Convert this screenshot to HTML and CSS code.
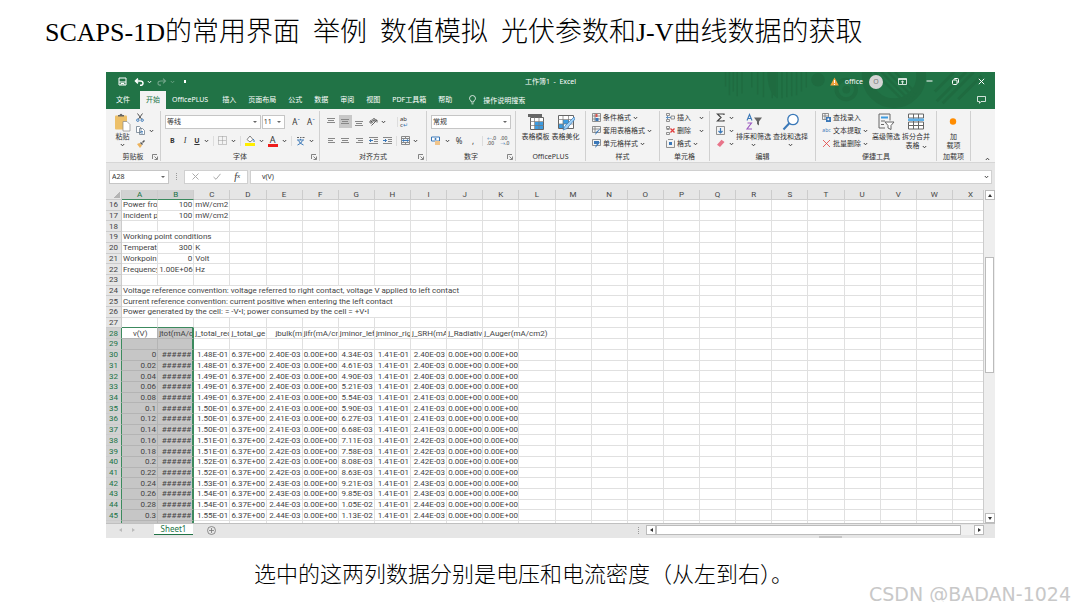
FILE: index.html
```html
<!DOCTYPE html>
<html lang="zh-CN">
<head>
	<meta charset="UTF-8">
	<title>SCAPS-1D</title>
	<link rel="stylesheet" href="styles.css">
</head>
<body>
	<!-- 公用图标 -->
	<svg class="defs">
		<symbol id="chev" viewBox="0 0 5 4"><path d="M.8 1l1.700 1.800L4.200 1" fill="none" stroke="currentColor" stroke-width=".9"/></symbol>
		<symbol id="launch" viewBox="0 0 6 6"><path d="M.5 5V.5H5M2.500 2.500L5 5M5.500 2.500v3h-3" fill="none" stroke="#666" stroke-width=".8"/></symbol>
	</svg>

	<h1><span class="en">SCAPS-1D</span>的常用界面<span class="en">  </span>举例<span class="en">  </span>数值模拟<span class="en">  </span>光伏参数和<span class="en">J-V</span>曲线数据的获取</h1>

	<div class="excel">
		<div class="top">
			<svg class="deco" viewBox="0 0 280 38" fill="none" stroke="#1f6b40">
				<path d="M7 0v15M11 0v24M15 0v20M19 0v25M24 0v22M34 0v16M40 0v23M46 0v26" stroke-width="1.500"/>
				<path d="M55 0v27M60 0v27M65 0v27M70 0v26M75 0v25M80 0v24M85 0v20M90 0v16" stroke-width="1.500"/>
				<path d="M50 0h9v26q-9-6-9-26z" fill="#1f6b40" stroke="none"/>
				<circle cx="102" cy="8" r="7" fill="#1f6b40" stroke="none"/>
				<circle cx="131" cy="18" r="10" stroke-width="4"/>
				<circle cx="131" cy="18" r="4" fill="#1f6b40" stroke="none"/>
				<circle cx="180" cy="4" r="28" stroke-width="10"/>
				<path d="M160 0l30 30M167 0l28 28M174 0l26 26M181 0l22 22" stroke-width="2.500"/>
				<path d="M224 30l30-30M230 32l32-32M222 20l20-20M246 28l24-24" stroke-width="3"/>
			</svg>
			<div class="titlebar">
				<div class="quick">
					<button aria-label="保存"><svg width="9" height="9" viewBox="0 0 9 9" fill="none" stroke="#fff"><path d="M1 1h7v7H1zM1 5h7M3 8V6.500h3V8"/></svg></button>
					<button aria-label="撤销"><svg width="10" height="8" viewBox="0 0 10 8" fill="none" stroke="#fff" stroke-width="1.500"><path d="M4 .6L1.500 3 4 5.400M1.500 3H6q3 0 3 2.200T6 7.200"/></svg></button>
					<svg class="chev"><use href="#chev"/></svg>
					<button aria-label="恢复" class="dim"><svg width="10" height="8" viewBox="0 0 10 8" fill="none" stroke="#fff" stroke-width="1.200"><path d="M6 .6L8.500 3 6 5.400M8.500 3H4Q1 3 1 5.200t3 2"/></svg></button>
					<svg class="chev dim"><use href="#chev"/></svg>
					<span class="more"></span>
				</div>
				<div class="doc">工作簿1  -  Excel</div>
				<div class="winbtns">
					<svg width="9" height="9" viewBox="0 0 9 9"><path d="M4.500.5L8.800 8.500H.2z" fill="#f2a33c"/><path d="M4.500 3v3M4.500 7v1" stroke="#fff"/></svg>
					<span class="user">office</span>
					<span class="avatar">O</span>
					<button aria-label="功能区显示选项"><svg width="9" height="7" viewBox="0 0 9 7" fill="none" stroke="#fff"><path d="M.5.5h8v6h-8zM.5 1.500h8M4.500 6V3M3 4.200L4.500 3 6 4.200" stroke-width=".8"/></svg></button>
					<button aria-label="最小化"><svg width="7" height="7" viewBox="0 0 7 7" stroke="#fff"><path d="M.5 3h6"/></svg></button>
					<button aria-label="还原"><svg width="7" height="7" viewBox="0 0 7 7" fill="none" stroke="#fff"><rect x=".5" y="2" width="4.500" height="4.500" rx="1"/><path d="M2 1.500q0-1 1-1h2.500q1 0 1 1V4q0 1-1 1"/></svg></button>
					<button aria-label="关闭"><svg width="7" height="7" viewBox="0 0 7 7" stroke="#fff"><path d="M.8.800l5.400 5.400M6.200.800L.8 6.200"/></svg></button>
				</div>
			</div>
			<nav class="tabs">
				<a href="#" class="file">文件</a>
				<a href="#" class="active">开始</a>
				<a href="#" class="plus">OfficePLUS</a>
				<a href="#">插入</a>
				<a href="#">页面布局</a>
				<a href="#">公式</a>
				<a href="#">数据</a>
				<a href="#">审阅</a>
				<a href="#">视图</a>
				<a href="#">PDF工具箱</a>
				<a href="#">帮助</a>
				<a href="#" class="tell"><svg width="7" height="10" viewBox="0 0 7 10" fill="none" stroke="#fff" stroke-width=".8"><path d="M2.200 7V6Q.5 4.800.5 3.200.8.500 3.500.500t3 2.700Q6.500 4.800 4.800 6v1zM2.500 8.800h2"/></svg>操作说明搜索</a>
				<button class="comment" aria-label="批注"><svg width="9" height="8" viewBox="0 0 9 8" fill="none" stroke="#fff" stroke-width=".8"><path d="M.5.500h8v5H4L2.500 7.300V5.500h-2z"/></svg></button>
			</nav>
		</div>

		<div class="ribbon">
			<section class="group">
				<div class="body clip">
					<button class="big">
						<svg width="17" height="19" viewBox="0 0 17 19"><rect x="1" y="3" width="12" height="14" rx="1" fill="#edc069"/><path d="M4 4V2.500h1.500Q7 0 8.500 2.500H10V4z" fill="#666"/><path d="M9 9h4l3 3v6.500H9z" fill="#fff" stroke="#888" stroke-width=".7"/></svg>
						粘贴<svg class="chev"><use href="#chev"/></svg>
					</button>
					<div class="stack">
						<button aria-label="剪切"><svg width="8" height="9" viewBox="0 0 8 9" fill="none"><path d="M1.500.500l4 5.500M6.500.500l-4 5.500" stroke="#555"/><circle cx="1.800" cy="7.200" r="1.200" stroke="#3a78b8"/><circle cx="6.200" cy="7.200" r="1.200" stroke="#3a78b8"/></svg></button>
						<button aria-label="复制"><svg width="9" height="9" viewBox="0 0 9 9" fill="#fff" stroke="#6d7c8c" stroke-width=".8"><path d="M.5.500h3l1.500 1.500v4.500H.5zM3.500 2.500h3L8.500 4.500v4h-5z"/><path d="M4.500 5.500H7M4.500 7H7" stroke="#3a78b8"/></svg><svg class="chev"><use href="#chev"/></svg></button>
						<button aria-label="格式刷"><svg width="9" height="8" viewBox="0 0 9 8"><path d="M1 4l2.500-1L6 5.500 4 8z" fill="#edb35c"/><path d="M4 3l1-1L7 4 6 5zM6 2l2-2 1 1-2 2z" fill="#555"/></svg></button>
					</div>
				</div>
				<h2>剪贴板<svg class="launch"><use href="#launch"/></svg></h2>
			</section>

			<section class="group">
				<div class="body font">
					<div class="line">
						<span class="pick wide"><select aria-label="字体"><option>等线</option></select></span>
						<span class="pick size"><select aria-label="字号"><option>11</option></select></span>
						<button class="grow" aria-label="增大字号">A<sup>ˆ</sup></button>
						<button class="grow" aria-label="减小字号">A<sup>ˇ</sup></button>
					</div>
					<div class="line marks">
						<button class="b">B</button>
						<button class="i">I</button>
						<button class="u">U</button><svg class="chev"><use href="#chev"/></svg>
						<span class="sep"></span>
						<button aria-label="边框"><svg width="9" height="9" viewBox="0 0 9 9" fill="none" stroke="#999" stroke-dasharray="1 1"><path d="M.5.500h8v8h-8zM4.500.500v8M.5 4.500h8"/></svg></button><svg class="chev"><use href="#chev"/></svg>
						<span class="sep"></span>
						<button aria-label="填充颜色"><svg width="10" height="11" viewBox="0 0 10 11"><path d="M2 4.500L5 1l3 3.500L5 7z" fill="#fff" stroke="#666" stroke-width=".8"/><path d="M8 4q1.500 1 1 3" stroke="#3a78b8" fill="none"/><path d="M0 8h10v3H0z" fill="#ffee00"/></svg></button><svg class="chev"><use href="#chev"/></svg>
						<button class="color" aria-label="字体颜色">A</button><svg class="chev"><use href="#chev"/></svg>
						<span class="sep"></span>
						<button class="pinyin" aria-label="拼音"><svg width="9" height="10" viewBox="0 0 9 10" fill="none"><path d="M1 1.500h2M4 1.500h1.500M6.500 1.500h2" stroke="#666"/><path d="M1 4h7M4.500 2.800V4M2.500 4.500q1 3 5 4.500M6.500 4.500q-1 3-5 4.500" stroke="#3a78b8"/></svg></button><svg class="chev"><use href="#chev"/></svg>
					</div>
				</div>
				<h2>字体<svg class="launch"><use href="#launch"/></svg></h2>
			</section>

			<section class="group">
				<div class="body align">
					<div class="line">
						<button aria-label="顶端对齐"><svg class="al"><path d="M0 1.500h8M1 3.500h6M0 5.500h8"/></svg></button>
						<button aria-label="垂直居中" class="on"><svg class="al"><path d="M0 2.500h8M1 4.500h6M0 6.500h8"/></svg></button>
						<button aria-label="底端对齐"><svg class="al"><path d="M0 4.500h8M1 6.500h6M0 8.500h8"/></svg></button>
						<button aria-label="方向" class="orient"><svg width="9" height="9" viewBox="0 0 9 9" fill="none" stroke="#555" stroke-width=".9"><path d="M1.500 3.500l2 2M3 2.500l2 2M2.500 8.500L8 3M8 5.500V3H5.500"/><circle cx="2" cy="5" r="1.200"/><circle cx="5" cy="2.800" r="1.200"/></svg></button><svg class="chev"><use href="#chev"/></svg>
						<span class="sep"></span>
						<button aria-label="自动换行" class="wrap">ab<br>c<i>↵</i></button>
					</div>
					<div class="line">
						<button aria-label="左对齐"><svg class="al"><path d="M1 2.500h7M1 4.500h5M1 6.500h7"/></svg></button>
						<button aria-label="居中"><svg class="al"><path d="M0 2.500h8M1 4.500h6M0 6.500h8"/></svg></button>
						<button aria-label="右对齐"><svg class="al"><path d="M1 2.500h7M3 4.500h5M1 6.500h7"/></svg></button>
						<button aria-label="减少缩进量"><svg class="al"><path d="M0 1.500h9M5 3.500h4M5 5.500h4M0 7.500h9"/><path d="M4 4.500H.5M2 3L.5 4.500 2 6" class="blue"/></svg></button>
						<button aria-label="增加缩进量"><svg class="al"><path d="M0 1.500h9M5 3.500h4M5 5.500h4M0 7.500h9"/><path d="M0 4.500h3.500M2 3l1.500 1.500L2 6" class="blue"/></svg></button>
						<span class="sep"></span>
						<button aria-label="合并后居中"><svg class="al"><path d="M.5.500h8v8h-8zM.5 2.500h8M.5 6.500h8M4.500.500v2M4.500 6.500v2"/><path d="M1.500 4.500h6M3 3.500l-1.500 1L3 5.500M6 3.500l1.500 1L6 5.500" class="blue"/></svg></button><svg class="chev"><use href="#chev"/></svg>
					</div>
				</div>
				<h2>对齐方式<svg class="launch"><use href="#launch"/></svg></h2>
			</section>

			<section class="group">
				<div class="body number">
					<div class="line"><span class="pick full"><select aria-label="数字格式"><option>常规</option></select></span></div>
					<div class="line">
						<button aria-label="会计数字格式"><svg width="10" height="9" viewBox="0 0 10 9"><path d="M.5 1h8v4h-8z" fill="#fff" stroke="#3a78b8"/><circle cx="4.500" cy="3" r="1" fill="#3a78b8"/><path d="M4 5h5v4H4z" fill="#f0c48a"/></svg></button><svg class="chev"><use href="#chev"/></svg>
						<button class="pct">%</button>
						<button class="pct">,</button>
						<span class="sep"></span>
						<button class="dec" aria-label="增加小数位数"><i>←</i>.0<br>.00</button>
						<button class="dec" aria-label="减少小数位数">.00<br><i>→</i>.0</button>
					</div>
				</div>
				<h2>数字<svg class="launch"><use href="#launch"/></svg></h2>
			</section>

			<section class="group">
				<div class="body bigs">
					<button class="big"><svg width="18" height="18" viewBox="0 0 18 18"><path d="M1 1h14v3H1z" fill="#666"/><path d="M3.500 4.500h13v12h-13z" fill="#fff" stroke="#666"/><path d="M8 9h8v7H8z" fill="#3d9be0"/><path d="M3 8.500h14M3 12.500h14M7.500 4v12M12 4v12" stroke="#777" stroke-width=".7"/></svg>表格模板</button>
					<button class="big"><svg width="18" height="18" viewBox="0 0 18 18"><path d="M1.500 2.500h15v13h-15z" fill="#fff" stroke="#666"/><path d="M6 7h6v4H6zM2 11h5v4H2z" fill="#3d9be0"/><path d="M1 6.500h15M1 11h15M6 3v12M11.500 3v12" stroke="#777" stroke-width=".7"/><path d="M17 4L8 13l-2 4 4-1.500 8-9.500z" fill="#9fd0f5" stroke="#3a78b8" stroke-width=".7"/></svg>表格美化</button>
				</div>
				<h2>OfficePLUS</h2>
			</section>

			<section class="group">
				<div class="body list">
					<button><svg class="ic"><path d="M.5.500h8v8h-8zM3 .5v8M.5 3h8M.5 6h8"/><path d="M3.500 1h2v3h-2z" class="fillred"/><path d="M3.500 5h3v3h-3z" class="fillblue"/></svg>条件格式<svg class="chev"><use href="#chev"/></svg></button>
					<button><svg class="ic"><path d="M.5.500h8v6h-8zM3 .5v6M.5 3h8"/><path d="M9 2L5 7 3 9l1-3z" class="fillblue"/></svg>套用表格格式<svg class="chev"><use href="#chev"/></svg></button>
					<button><svg class="ic"><path d="M.5.500h8v6h-8z"/><path d="M2 2h5v3H2zM9 2L5 7 3 9l1-3z" class="fillblue"/></svg>单元格样式<svg class="chev"><use href="#chev"/></svg></button>
				</div>
				<h2>样式</h2>
			</section>

			<section class="group">
				<div class="body list cells">
					<button><svg class="ic"><path d="M.5.500h3v2h-3zM.5 6.500h3v2h-3zM5 3h3.500v3H5z"/><path d="M5 4.500H.5M2 3L.5 4.500 2 6" class="blue"/></svg>插入<svg class="chev far"><use href="#chev"/></svg></button>
					<button><svg class="ic"><path d="M.5.500h3v2h-3zM.5 6.500h3v2h-3zM.5 3.500h3"/><path d="M4.500 2.500l4 4M8.500 2.500l-4 4" class="red" stroke-width="1.300"/></svg>删除<svg class="chev far"><use href="#chev"/></svg></button>
					<button><svg class="ic"><path d="M.5 1.500v7h8v-7M2 .5h5"/><path d="M3 3h3v3H3z" class="fillblue"/></svg>格式<svg class="chev"><use href="#chev"/></svg></button>
				</div>
				<h2>单元格</h2>
			</section>

			<section class="group">
				<div class="body edit">
					<div class="list">
						<button aria-label="自动求和"><svg class="ic"><path d="M8 2V1H1.500L5 4.500 1.500 8H8V7" stroke="#444" stroke-width="1.200"/></svg><svg class="chev"><use href="#chev"/></svg></button>
						<button aria-label="填充"><svg class="ic"><path d="M.5.500h8v8h-8z"/><path d="M4.500 2v5M2.500 5l2 2 2-2" class="blue" stroke-width="1.200"/></svg><svg class="chev"><use href="#chev"/></svg></button>
						<button aria-label="清除"><svg class="ic"><path d="M5.500.800L8.500 3 4 8 1 5.800z" fill="#e8748a" stroke="none"/></svg><svg class="chev"><use href="#chev"/></svg></button>
					</div>
					<button class="big"><svg width="18" height="19" viewBox="0 0 18 19" fill="none"><path d="M2 8l2.500-6L7 8M3 6h3" stroke="#3a78b8" stroke-width="1.100"/><path d="M2.500 10.500h4L2 16.500h5" stroke="#9b57c0" stroke-width="1.100"/><path d="M9 5h8l-3 4v4l-2-1.500V9z" fill="#666"/></svg>排序和筛选<svg class="chev"><use href="#chev"/></svg></button>
					<button class="big"><svg width="18" height="19" viewBox="0 0 18 19" fill="none" stroke="#3a78b8"><circle cx="11" cy="7" r="5.200" fill="#fff" stroke-width="1.300"/><path d="M7.300 10.800L1.500 17" stroke-width="2"/></svg>查找和选择<svg class="chev"><use href="#chev"/></svg></button>
				</div>
				<h2>编辑</h2>
			</section>

			<section class="group">
				<div class="body tools">
					<div class="list">
						<button><svg class="ic"><path d="M.5.500h6v6h-6zM.5 3h6M3 .5v6"/><path d="M4 4h5v5H4z" class="fillblue"/><circle cx="6.300" cy="6.300" r="1" fill="#fff" stroke="none"/></svg>查找录入</button>
						<button><span class="abc">abc</span>文本提取<svg class="chev"><use href="#chev"/></svg></button>
						<button><svg class="ic"><path d="M1 1l7 7M8 1L1 8" class="red"/></svg>批量删除<svg class="chev"><use href="#chev"/></svg></button>
					</div>
					<button class="big"><svg width="18" height="19" viewBox="0 0 18 19" fill="none" stroke="#666"><path d="M13 8V1.500H2v14h6"/><path d="M4 5h7" stroke="#3d9be0" stroke-width="2"/><path d="M4 8.500h4M4 12h3"/><path d="M8 9.500h9L14 13v4l-3-1.500V13z" fill="#fff"/></svg>高级筛选</button>
					<button class="big"><svg width="18" height="19" viewBox="0 0 18 19" fill="#fff" stroke="#666"><path d="M1.500 1.500h15v4h-15zM1.500 9.500h15v7h-15zM1.500 13h15M6.500 1.500v15M11.500 1.500v15"/><path d="M1 6h16v2.500H1z" fill="#5eb1ea" stroke="none"/></svg>拆分合并<span class="two">表格 <svg class="chev"><use href="#chev"/></svg></span></button>
				</div>
				<h2>便捷工具</h2>
			</section>

			<section class="group">
				<div class="body bigs">
					<button class="big"><svg width="18" height="19" viewBox="0 0 18 19"><circle cx="8" cy="9" r="3.200" fill="#ff8c00"/></svg>加<span>载项</span></button>
				</div>
				<h2>加载项</h2>
			</section>
			<button class="collapse" aria-label="折叠功能区"><svg class="chev"><use href="#chev"/></svg></button>
		</div>

		<div class="formula">
			<span class="pick name"><input aria-label="名称框" value="A28"></span>
			<span class="dots"></span>
			<div class="fxbox">
				<button aria-label="取消"><svg width="7" height="7" viewBox="0 0 7 7" stroke="#aaa"><path d="M.5.500l6 6M6.500.500l-6 6"/></svg></button>
				<button aria-label="输入"><svg width="8" height="7" viewBox="0 0 8 7" fill="none" stroke="#aaa"><path d="M.5 4L3 6.300 7.500.800"/></svg></button>
				<button class="fx">f<small>x</small></button>
			</div>
			<span class="content"><input aria-label="编辑栏" value="      v(V)"><svg class="chev"><use href="#chev"/></svg></span>
		</div>

		<div class="sheet">
			<div class="cellsbox"><table id="grid"></table></div>
			<div class="vbar">
				<button class="up" aria-label="向上"></button>
				<div class="track"><div class="thumb"></div></div>
				<button class="down" aria-label="向下"></button>
			</div>
		</div>

		<div class="bottom">
			<span class="move left"></span>
			<span class="move right"></span>
			<a href="#" class="sheettab">Sheet1</a>
			<button class="add" aria-label="新工作表"><svg width="9" height="9" viewBox="0 0 9 9" fill="none" stroke="#777" stroke-width=".8"><circle cx="4.500" cy="4.500" r="4"/><path d="M4.500 2v5M2 4.500h5"/></svg></button>
			<span class="dots"></span>
			<div class="hbar">
				<button class="prev" aria-label="向左"></button>
				<div class="thumb"></div>
				<button class="next" aria-label="向右"></button>
			</div>
		</div>
		<div class="grip"></div>
	</div>

	<p class="caption">选中的这两列数据分别是电压和电流密度（从左到右）。</p>
	<div class="mark">CSDN @BADAN-1024</div>
	<script src="sheet.js"></script>
</body>
</html>
```

FILE: styles.css
```css
*{
	margin: 0;
	padding: 0;
	box-sizing: border-box;
}
body{
	background: #ffffff;
	font-family: "Liberation Serif","Noto Sans CJK SC",serif;
	color: #000000;
	overflow: hidden;
}
a{
	color: inherit;
	text-decoration: none;
}
button{
	border: none;
	background: transparent;
	font: inherit;
	color: inherit;
	display: flex;
	align-items: center;
	white-space: nowrap;
}
svg{
	flex: none;
	display: block;
}
.defs{
	width: 0;
	height: 0;
	position: absolute;
}
h1{
	padding: 11px 0 0 45px;
	height: 72px;
	font-family: "Noto Sans CJK SC",sans-serif;
	font-size: 27px;
	line-height: 38px;
	font-weight: 300;
	white-space: pre;
}
.en{
	font-family: "Liberation Serif",serif;
	font-size: 26px;
	font-weight: 400;
}
.excel{
	margin: 0 79px 0 106px;
	background: #e6e6e6;
	font-family: "Noto Sans","Noto Sans CJK SC",sans-serif;
	font-size: 7px;
	line-height: 9px;
	color: #333333;
}
.chev{
	width: 5px;
	height: 4px;
}
.dim{
	opacity: 0.35;
}
/*绿色标题栏*/
.top{
	position: relative;
	background: #217346;
	color: #ffffff;
}
.deco{
	position: absolute;
	right: 0;
	top: 0;
	width: 280px;
	height: 37px;
}
.titlebar{
	position: relative;
	display: grid;
	grid-template-columns: 1fr auto 1fr;
	align-items: center;
	height: 19px;
}
.quick{
	display: flex;
	align-items: center;
	gap: 3px;
	padding-left: 12px;
}
.quick button{
	margin-left: 2px;
}
.quick button:first-child{
	margin: 0 2px 0 0;
}
.more{
	width: 2px;
	height: 3px;
	margin-left: 6px;
	background: #ffffff;
}
.doc{
	white-space: pre;
}
.winbtns{
	display: flex;
	align-items: center;
	justify-content: flex-end;
	padding-right: 10px;
}
.winbtns button{
	margin-left: 19px;
}
.user{
	margin: 0 6px;
}
.avatar{
	width: 14px;
	height: 14px;
	border-radius: 50%;
	background: #d5d5d5;
	color: #777777;
	text-align: center;
	line-height: 14px;
	margin-right: -4px;
}
.tabs{
	position: relative;
	display: flex;
	height: 18px;
	line-height: 17px;
}
.tabs a{
	padding: 0 6px;
	white-space: nowrap;
}
.tabs .file{
	padding: 0 10px;
}
.tabs .plus{
	padding-right: 8px;
}
.tabs .active{
	background: #f3f3f3;
	color: #217346;
}
.tabs .tell{
	display: flex;
	align-items: center;
	gap: 7px;
	margin-left: 5px;
}
.comment{
	margin-left: auto;
	padding-right: 9px;
}
/*功能区*/
.ribbon{
	display: grid;
	grid-template-columns: 55px 159px 107px 89px 70px 74px 50px 106px 121px 34px 1fr;
	height: 54px;
	padding: 2px 0 1px;
	background: #f3f3f3;
	border-bottom: 1px solid #d6d6d6;
}
.group{
	position: relative;
	display: flex;
	flex-direction: column;
	border-right: 1px solid #d0d0d0;
}
.group h2{
	font-size: 7px;
	line-height: 8px;
	font-weight: normal;
	text-align: center;
}
.launch{
	position: absolute;
	right: 2px;
	bottom: 1px;
	width: 6px;
	height: 6px;
}
.body{
	height: 42px;
}
.line{
	display: flex;
	align-items: center;
	height: 19px;
}
.sep{
	width: 1px;
	height: 10px;
	background: #dddddd;
}
.big{
	flex-direction: column;
	line-height: 9px;
	padding-top: 1px;
}
.big > svg:first-child{
	height: 20px;
}
.big .chev{
	margin-top: 2px;
}
.clip{
	display: flex;
	align-items: flex-start;
	gap: 5px;
	padding-left: 8px;
}
.stack,.list{
	display: flex;
	flex-direction: column;
}
.stack button,.list button{
	height: 13px;
	gap: 2px;
}
.stack button{
	gap: 4px;
}
.font,.align,.number{
	padding: 1px 4px 0;
}
.pick{
	position: relative;
	display: block;
	height: 14px;
	background: #ffffff;
	border: 1px solid #c6c6c6;
}
.pick:after{
	content: "";
	position: absolute;
	right: 3px;
	top: 5px;
	border: 2px solid transparent;
	border-top-color: #666666;
	border-bottom: none;
}
.pick select,.pick input{
	appearance: none;
	display: block;
	width: 100%;
	height: 12px;
	padding-left: 1px;
	border: none;
	background: transparent;
	font: inherit;
	color: inherit;
}
.wide{
	width: 99px;
}
.size{
	width: 24px;
	margin-left: 1px;
}
.full{
	width: 80px;
}
.grow{
	margin-left: 7px;
	font-size: 8px;
}
.grow sup{
	color: #3a78b8;
}
.marks{
	gap: 4px;
	padding-left: 5px;
}
.b{
	font-weight: bold;
	margin-right: 5px;
}
.i{
	font-family: "Liberation Serif",serif;
	font-style: italic;
	font-size: 8px;
	margin-right: 4px;
}
.u{
	text-decoration: underline;
	font-weight: bold;
}
.color{
	width: 10px;
	height: 12px;
	justify-content: center;
	font-size: 9px;
	border-bottom: 3px solid #ee1c1c;
}
.align .line{
	gap: 1px;
	padding-left: 1px;
}
.align .line button{
	width: 13px;
	height: 13px;
	justify-content: center;
}
.align .sep{
	margin: 0 1px;
}
.align .orient + .chev{
	margin-right: 9px;
}
.align .on{
	background: #c8c8c8;
}
.al{
	width: 9px;
	height: 9px;
	fill: none;
	stroke: #888888;
}
.blue{
	stroke: #3a78b8;
}
.red{
	stroke: #e23d3d;
}
.fillblue{
	fill: #3a78b8;
	stroke: none;
}
.fillred{
	fill: #d9534f;
	stroke: none;
}
.align .wrap,.dec{
	display: block;
	text-align: left;
	font-size: 6px;
	line-height: 6px;
}
.wrap i,.dec i{
	font-style: normal;
	color: #3a78b8;
}
.number .line + .line{
	gap: 4px;
}
.pct{
	width: 10px;
	justify-content: center;
	font-size: 8px;
}
.dec{
	font-size: 5px;
	line-height: 5px;
}
.bigs{
	display: flex;
	justify-content: center;
	gap: 2px;
	align-items: flex-start;
}
.list{
	padding-left: 6px;
}
.ic{
	width: 9px;
	height: 9px;
	fill: none;
	stroke: #777777;
	stroke-width: 0.8px;
}
.list .far{
	margin-left: 6px;
}
.edit,.tools{
	display: flex;
	align-items: flex-start;
	gap: 2px;
}
.edit .list button{
	gap: 4px;
}
.tools .list{
	width: 54px;
}
.abc{
	width: 9px;
	font-size: 5px;
	color: #3a78b8;
}
.two{
	display: flex;
	align-items: center;
	gap: 2px;
}
.collapse{
	justify-self: end;
	align-self: end;
	margin-right: 5px;
	transform: rotate(180deg);
}
/*编辑栏*/
.formula{
	display: flex;
	align-items: center;
	height: 27px;
	padding: 0 3px;
}
.name{
	width: 60px;
}
.name input{
	padding-left: 2px;
}
.dots{
	width: 1px;
	height: 7px;
	border-left: 1px dotted #999999;
}
.formula .dots{
	margin: 0 7px;
}
.fxbox{
	display: flex;
	align-items: center;
	justify-content: space-around;
	width: 64px;
	height: 14px;
	background: #ffffff;
	border: 1px solid #d0d0d0;
}
.fx{
	font-family: "Liberation Serif",serif;
	font-style: italic;
	font-size: 10px;
}
.fx small{
	font-size: 7px;
}
.content{
	flex: 1;
	display: flex;
	align-items: center;
	height: 14px;
	margin-left: 2px;
	padding-right: 2px;
	background: #ffffff;
	border: 1px solid #d0d0d0;
}
.content input{
	flex: 1;
	border: none;
	background: transparent;
	font: inherit;
	color: inherit;
}
/*表格区*/
.sheet{
	display: flex;
	height: 333px;
}
.cellsbox{
	flex: 1;
	min-width: 0;
	overflow: hidden;
	background: #ffffff;
}
#grid{
	table-layout: fixed;
	width: calc(100% + 6px);
	height: 342px;
	border-collapse: separate;
	border-spacing: 0;
	font-family: Roboto,sans-serif;
	font-size: 8px;
	line-height: 9px;
	color: #444444;
}
#grid th{
	background: #e6e6e6;
	border-right: 1px solid #cccccc;
	border-bottom: 1px solid #cccccc;
	font-weight: normal;
}
#grid th:first-child{
	width: 16px;
}
#grid td{
	padding: 0 1px;
	border-right: 1px solid #e0e0e0;
	border-bottom: 1px solid #e0e0e0;
	white-space: pre;
	overflow: hidden;
}
#grid .num{
	text-align: right;
}
#grid th.sel{
	background: #d2d2d2;
	color: #217346;
}
#grid thead .sel{
	border-bottom-color: #3c8a5e;
}
#grid td.sel{
	background: #c6c6c6;
	border-color: #b4b4b4;
}
#grid td.cur{
	background: #ffffff;
}
#grid td.edge{
	border-right: 2px solid #3c8a5e;
}
#grid th.rowsel{
	border-right-color: #3c8a5e;
}
#grid td.head{
	border-bottom-color: #3c8a5e;
}
#grid .corner:after{
	content: "";
	display: block;
	margin-left: 7px;
	width: 7px;
	height: 7px;
	background: linear-gradient(135deg,transparent 50%,#b4b4b4 50%);
}
.vbar{
	display: flex;
	flex-direction: column;
	width: 12px;
	padding: 0 1px;
	border-left: 1px solid #cccccc;
	background: #eeeeee;
}
.vbar button,.hbar button{
	justify-content: center;
	width: 10px;
	height: 10px;
	background: #ffffff;
	border: 1px solid #bbbbbb;
	flex: none;
}
.vbar button:after,.hbar button:after{
	content: "";
	border: 2px solid transparent;
}
.vbar .up:after{
	border-bottom: 3px solid #333333;
	border-top: none;
}
.vbar .down:after{
	border-top: 3px solid #333333;
	border-bottom: none;
}
.hbar .prev:after{
	border-right: 3px solid #333333;
	border-left: none;
}
.hbar .next:after{
	border-left: 3px solid #333333;
	border-right: none;
}
.track{
	flex: 1;
	padding-top: 57px;
}
.thumb{
	background: #ffffff;
	border: 1px solid #bbbbbb;
}
.track .thumb{
	height: 116px;
}
.bottom{
	display: flex;
	align-items: center;
	height: 13px;
	padding: 0 11px 0 13px;
	border-top: 1px solid #c0c0c0;
}
.move{
	border: 2px solid transparent;
	margin-right: 10px;
}
.move.left{
	border-right: 3px solid #bbbbbb;
	border-left: none;
}
.move.right{
	border-left: 3px solid #bbbbbb;
	border-right: none;
	margin-right: 19px;
}
.sheettab{
	align-self: flex-start;
	width: 39px;
	height: 11px;
	margin-right: 14px;
	background: #ffffff;
	border-bottom: 1px solid #217346;
	color: #217346;
	text-align: center;
	font-size: 8px;
	line-height: 9px;
}
.bottom .dots{
	margin-left: auto;
	margin-right: 7px;
}
.hbar{
	display: flex;
	flex: 0 1 338px;
	background: #f0f0f0;
}
.hbar .thumb{
	flex: 1;
	margin-right: 13px;
}
.grip{
	width: 23px;
	height: 2px;
	margin-left: auto;
	margin-right: 153px;
	background: #c6c6c6;
}
.caption{
	padding-left: 254px;
	margin-top: 20px;
	font-family: "Noto Sans CJK SC",sans-serif;
	font-size: 22px;
	line-height: 28px;
	font-weight: 300;
}
.mark{
	padding-right: 3px;
	text-align: right;
	font-family: "DejaVu Sans",sans-serif;
	font-size: 19px;
	line-height: 16px;
	color: #c8c8c8;
}
```

FILE: sheet.js
```js
var letters = "ABCDEFGHIJKLMNOPQRSTUVWX".split("");
// 每行: [内容, 类型, 占几列]
var text = {
	16: [["Power fro"], ["100", "num"], ["mW/cm2"]],
	17: [["Incident p"], ["100", "num"], ["mW/cm2"]],
	19: [["Working point conditions", "", 3]],
	20: [["Temperat"], ["300", "num"], ["K"]],
	21: [["Workpoin"], ["0", "num"], ["Volt"]],
	22: [["Frequency"], ["1.00E+06", "num"], ["Hz"]],
	24: [["Voltage reference convention: voltage referred to right contact, voltage V applied to left contact", "", 10]],
	25: [["Current reference convention: current positive when entering the left contact", "", 8]],
	26: [["Power generated by the cell: = -V•I; power consumed by the cell = +V•I", "", 8]],
	28: [["     v(V)"], ["jtot(mA/c"], ["j_total_rec"], ["j_total_ge"], ["    jbulk(m"], ["jifr(mA/cm"], ["jminor_lef"], ["jminor_rig"], ["j_SRH(mA"], ["j_Radiative"], ["j_Auger(mA/cm2)", "", 2]]
};
var rec = ["1.48", "1.48", "1.49", "1.49", "1.49", "1.50", "1.50", "1.50", "1.51", "1.51", "1.52", "1.52", "1.53", "1.54", "1.54", "1.55", "1.56"];
var bulk = ["2.40", "2.40", "2.40", "2.40", "2.41", "2.41", "2.41", "2.41", "2.42", "2.42", "2.42", "2.42", "2.43", "2.43", "2.44", "2.44", "2.45"];
var minor = ["4.34E-03", "4.61E-03", "4.90E-03", "5.21E-03", "5.54E-03", "5.90E-03", "6.27E-03", "6.68E-03", "7.11E-03", "7.58E-03", "8.08E-03", "8.63E-03", "9.21E-03", "9.85E-03", "1.05E-02", "1.13E-02", "1.21E-02"];

// J-V 数据从第30行开始
for(var i=0;i<rec.length;i++){
	var zero = "0.00E+00";
	var list = [String(i*2/100), "######", rec[i]+"E-01", "6.37E+00", bulk[i]+"E-03", zero, minor[i], "1.41E-01", bulk[i]+"E-03", zero, zero];
	text[30+i] = list.map(function(v){ return [v, "num"]; });
}

var html = "<thead><tr><th class='corner'></th>";
for(var i=0;i<letters.length;i++){
	html += "<th class='"+(i<2 ? "sel" : "")+"'>"+letters[i]+"</th>";
}
html += "</tr></thead><tbody>";
for(var r=16;r<=46;r++){
	var row = text[r] || [];
	html += "<tr><th class='"+(r>=28 ? "sel rowsel" : "")+"'>"+r+"</th>";
	var n = 0;
	for(var c=0;n<letters.length;c++){
		var cell = row[c] || [""];
		var span = cell[2] || 1;
		var cls = cell[1] || "";
		if(r>=28 && n<2){
			cls += " sel";
			if(n==1) cls += " edge";
			if(r==28 && n==0) cls += " cur";
		}
		// 选区的上边线
		if(r==27 && n<2) cls += " head";
		html += "<td class='"+cls+"' colspan='"+span+"'>"+cell[0]+"</td>";
		n += span;
	}
	html += "</tr>";
}
document.getElementById("grid").innerHTML = html+"</tbody>";
```
